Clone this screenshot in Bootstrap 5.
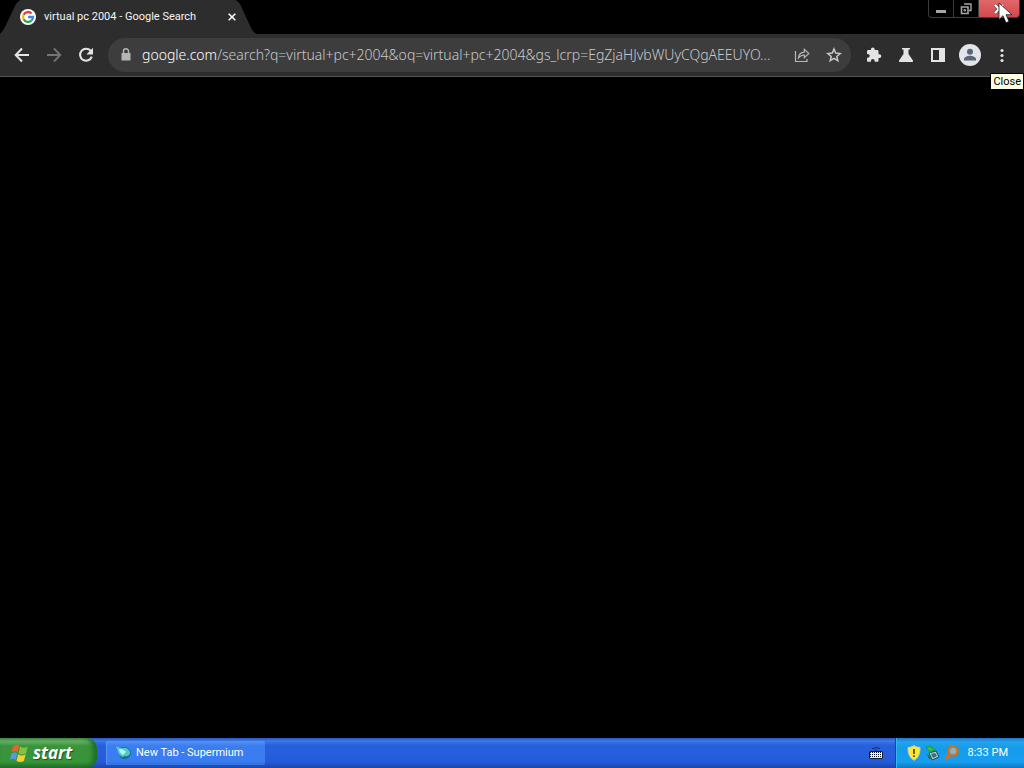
<!DOCTYPE html>
<html lang="en">
<head>
<meta charset="utf-8">
<meta name="viewport" content="width=device-width, initial-scale=1">
<title>virtual pc 2004 - Google Search</title>
<link href="https://cdn.jsdelivr.net/npm/bootstrap@5.3.0/dist/css/bootstrap.min.css" rel="stylesheet">
<style>
  body { background: #000; font-family: Roboto, sans-serif; font-size: 11px; line-height: 16px; cursor: default; }
  button { border: 0; padding: 0; background: none; color: inherit; }
  svg { display: block; flex: none; }
  .tab-strip { height: 34px; }
  .browser-tab { width: 256px; height: 34px; padding: 0 16px 0 20px; background: #2d2d2e; color: #f4f4f4; clip-path: polygon(0 100%, 4px 29px, 16px 4px, 20px 0, 236px 0, 240px 4px, 252px 30px, 100% 100%); }
  .caption-buttons { height: 18px; margin-right: 4px; border: 1px solid #3c3c3e; border-top: 0; border-radius: 0 0 4px 4px; overflow: hidden; }
  .caption-buttons button { width: 25px; height: 17px; color: #a4a5a5; border-right: 1px solid #3c3c3e; }
  .caption-buttons .close-window { width: 40px; border: 0; background: linear-gradient(#e0686a, #d3484f); color: #fff; }
  .toolbar { height: 43px; background: #2d2d2e; border-bottom: 1px solid #555; color: #e4e4e4; padding: 0 6px; }
  .tool { width: 32px; height: 32px; }
  .forward { color: #747475; }
  .omnibox { height: 34px; margin-left: 6px; border-radius: 17px; background: #3d3d3e; font-family: "Noto Sans", sans-serif; font-weight: 300; font-size: 14px; line-height: 20px; padding: 0 1px 0 10px; }
  .omnibox label { color: #fff; }
  .omnibox input { border: 0; outline: 0; padding: 0; background: none; color: #c8c8c9; min-width: 0; font: inherit; text-overflow: ellipsis; }
  .actions { margin-left: 7px; }
  .tip { right: 0; top: 73px; background: #ffffe4; color: #000; border: 1px solid #000; padding: 0 2px; height: 17px; }
  .pointer { right: 10px; top: 2px; z-index: 5; pointer-events: none; }
  .taskbar { height: 30px; color: #fff; background: linear-gradient(#2c58c4 0, #3a7bea 3px, #2760dc 7px, #245bda 24px, #1b46a8 30px); }
  .start { width: 97px; padding-left: 9px; border-radius: 0 10px 10px 0; background: linear-gradient(#5b9b5b 0, #66b565 3px, #3c923e 8px, #369638 24px, #256b2b 30px); box-shadow: inset -4px 0 5px #1d6c2c; font: italic bold 17px/24px "Open Sans", sans-serif; text-shadow: 1px 1px 1px #244d22; }
  .task { width: 159px; height: 24px; margin: 3px 0 0 9px; padding-left: 10px; border-radius: 2px; background: linear-gradient(#5792f2, #397df0 5px, #397df0 20px, #3371df); box-shadow: inset 1px 0 #5c95f3; }
  .tray { width: 129px; padding: 0 16px 0 11px; border-left: 1px solid #12479f; background: linear-gradient(#2874cc 0, #23a4ee 4px, #159bea 10px, #179eef 24px, #1276bf 30px); box-shadow: inset 1px 0 #35b6f3; }
</style>
</head>
<body class="vh-100 d-flex flex-column overflow-hidden position-relative">
<header>
  <div class="tab-strip d-flex align-items-start justify-content-between">
    <div class="browser-tab d-flex align-items-center">
      <svg width="16" height="16" viewBox="0 0 16 16"><circle cx="8" cy="8" r="8" fill="#fff"/><g fill="none" stroke-width="2.3"><path d="M11.6 4.5A5 5 0 0 0 3.6 5.7" stroke="#e34133"/><path d="M3.6 5.7a5 5 0 0 0 0 4.6" stroke="#f2b819"/><path d="M3.6 10.3a5 5 0 0 0 7.8 1.3" stroke="#34a353"/><path d="M11.4 11.6A5 5 0 0 0 13 8H8" stroke="#4285e8"/></g></svg>
      <span class="ms-2 flex-grow-1 text-nowrap">virtual pc 2004 - Google Search</span>
      <button aria-label="Close tab" class="p-1"><svg width="8" height="8" viewBox="0 0 8 8"><path d="M.7.7l6.6 6.6M7.3.7L.7 7.3" stroke="#fff" stroke-width="1.6"/></svg></button>
    </div>
    <div class="caption-buttons d-flex">
      <button aria-label="Minimize" class="d-flex justify-content-center align-items-center"><svg width="10" height="12"><path d="M0 7h10v3H0z" fill="currentColor"/></svg></button>
      <button aria-label="Restore" class="d-flex justify-content-center align-items-center"><svg width="12" height="12" viewBox="0 0 12 12" fill="none" stroke="currentColor"><path d="M4 1h7v6.500H9" stroke-width="1.4"/><path d="M1.500 4h6.500v6.500H1.500z" stroke-width="1.6"/><path d="M4 6.500h1.500v1.500H4z"/></svg></button>
      <button aria-label="Close" class="close-window d-flex justify-content-center align-items-center"><svg width="12" height="10" viewBox="0 0 12 10"><path d="M2 1l8 8M10 1L2 9" stroke="#555" stroke-width="3.6"/><path d="M2 1l8 8M10 1L2 9" stroke="#fff" stroke-width="2.2"/></svg></button>
    </div>
  </div>
  <div class="toolbar d-flex align-items-center">
    <button class="tool d-flex justify-content-center align-items-center" aria-label="Back"><svg width="16" height="16" viewBox="0 0 16 16" fill="none" stroke="currentColor" stroke-width="2"><path d="M15 8H2M8 1.5L1.7 8 8 14.5"/></svg></button>
    <button class="tool forward d-flex justify-content-center align-items-center" aria-label="Forward"><svg width="16" height="16" viewBox="0 0 16 16" fill="none" stroke="currentColor" stroke-width="1.8"><path d="M1 8h13M8 1.5L14.3 8 8 14.5"/></svg></button>
    <button class="tool d-flex justify-content-center align-items-center" aria-label="Reload"><svg width="16" height="16" viewBox="0 0 16 16"><path d="M13 4.2A6 6 0 1 0 13.8 9.6" fill="none" stroke="currentColor" stroke-width="2.1"/><path d="M15 .8v6.7H8.3z" fill="currentColor"/></svg></button>
    <div class="omnibox d-flex align-items-center flex-grow-1">
      <svg width="16" height="16" viewBox="0 0 16 16"><path d="M3.5 6h9v7.500h-9z" fill="#b5b5b6"/><path d="M5.5 6.500V4.300a2.500 2.500 0 0 1 5 0v2.200" fill="none" stroke="#b5b5b6" stroke-width="1.5"/></svg>
      <label for="url" class="ps-2">google.com</label>
      <input id="url" class="flex-grow-1 me-2" type="text" value="/search?q=virtual+pc+2004&amp;oq=virtual+pc+2004&amp;gs_lcrp=EgZjaHJvbWUyCQgAEEUYO...">
      <button class="tool d-flex justify-content-center align-items-center" aria-label="Share"><svg width="16" height="16" viewBox="0 0 16 16" fill="none" stroke="#b8b8b8" stroke-width="1.2"><path d="M1.5 4v10.500h11.500V12"/><path d="M4.500 11C4.800 7.200 6.800 5.200 10.300 5.100V2.300l4.500 4.200-4.500 4.200V8C7.800 8 6 9 4.500 11z"/></svg></button>
      <button class="tool d-flex justify-content-center align-items-center" aria-label="Bookmark"><svg width="16" height="16" viewBox="0 0 16 16" fill="none" stroke="#c8c8c8" stroke-width="1.5"><path d="M8 2l1.700 4.100 4.500.4-3.400 2.900 1 4.300L8 11.400l-3.800 2.300 1-4.300-3.400-2.900 4.500-.4z"/></svg></button>
    </div>
    <div class="actions d-flex align-items-center">
      <button class="tool d-flex justify-content-center align-items-center" aria-label="Extensions"><svg width="16" height="16" viewBox="0 0 16 16" fill="currentColor"><path d="M13.4 7.2h-.9V4.4c0-.7-.6-1.3-1.3-1.3H8.7v-.7a1.9 1.9 0 0 0-3.8 0v.7H2.2C1.5 3.100 1 3.700 1 4.400v2.500h.8a1.900 1.900 0 0 1 0 3.800H1v2.700c0 .7.500 1.300 1.200 1.300h2.700v-.8a1.900 1.900 0 0 1 3.800 0v.8h2.500c.7 0 1.300-.6 1.300-1.300V11h.9a1.900 1.900 0 0 0 0-3.800z"/></svg></button>
      <button class="tool d-flex justify-content-center align-items-center" aria-label="Experiments"><svg width="16" height="16" viewBox="0 0 16 16" fill="currentColor"><path d="M4 1h8v1.600h-1.500V7l4.300 6.200c.6.900.1 1.800-.9 1.800H2.100c-1 0-1.500-.9-.9-1.800L5.500 7V2.600H4z"/></svg></button>
      <button class="tool d-flex justify-content-center align-items-center" aria-label="Side panel"><svg width="16" height="16" viewBox="0 0 16 16"><path d="M1 1h14v14H1zM3 3v10h6V3z" fill="currentColor" fill-rule="evenodd"/></svg></button>
      <button class="tool d-flex justify-content-center align-items-center" aria-label="Profile"><svg width="22" height="22" viewBox="0 0 22 22"><circle cx="11" cy="11" r="11" fill="#e2e4ea"/><g fill="#5b6475"><circle cx="11" cy="7.800" r="3"/><path d="M5 16.500V15c0-2 3.500-3.300 6-3.300s6 1.300 6 3.300v1.500z"/></g></svg></button>
      <button class="tool d-flex justify-content-center align-items-center" aria-label="Menu"><svg width="16" height="16" viewBox="0 0 16 16" fill="currentColor"><circle cx="8" cy="3.500" r="1.600"/><circle cx="8" cy="8.500" r="1.600"/><circle cx="8" cy="13.500" r="1.600"/></svg></button>
    </div>
  </div>
</header>
<main class="flex-grow-1"></main>
<footer class="taskbar d-flex align-items-stretch">
  <button class="start d-flex align-items-center"><svg class="me-1" width="20" height="20" viewBox="0 0 20 20"><path d="M4 3.500Q7 .5 10.200 2.800L8.600 9.300Q5.500 7 2.500 9.600z" fill="#e8622c"/><path d="M11.200 3.500Q14.500 6 18.700 3.600L17 10.200q-4 2.400-7.500 0z" fill="#82c341"/><path d="M2.300 10.800Q5.200 8.200 8.300 10.400L6.600 17Q3.500 14.600.8 17.300z" fill="#5a96e8"/><path d="M9.200 11.300q3.700 2.400 7.500 0L15 17.700q-4 2.500-7.500 0z" fill="#f7cf34"/></svg>start</button>
  <button class="task d-flex align-items-center"><svg class="me-1" width="16" height="16" viewBox="0 0 16 16"><path d="M3 3q5-2 9 0 3 2 3 5-1 5-6 6-5 0-6-5z" fill="#176f8c"/><path d="M0 1q3 2 6 2 5-1 7 2 2 3 0 5-2 2-4 1l-2 1q-4-1-5-5z" fill="#4fc9c6"/><path d="M3 4q5 0 7 3l-3 3q-3-1-4-6z" fill="#b9f3ea"/></svg>New Tab - Supermium</button>
  <button class="ms-auto me-2 px-1 d-flex align-items-center" aria-label="Keyboard"><svg width="14" height="14" viewBox="0 0 14 14"><path d="M3 2.500h3v-1h3v1h2M7 3v2" fill="none" stroke="#18316e"/><path d="M0 5h14v8H0z" fill="#e8edf6"/><path d="M1 6.500h12M1 8.500h12M1 10.500h12" stroke="#10182e" stroke-dasharray="1 1"/><path d="M.5 5.500h13v7H.5z" fill="none" stroke="#10182e"/></svg></button>
  <div class="tray d-flex align-items-center">
    <svg width="14" height="16" viewBox="0 0 14 16"><path d="M7 .6c2 1.400 4 1.800 6 1.900.2 6-1.600 10.300-6 12.700C2.600 12.800.8 8.500 1 2.500 3 2.400 5 2 7 .6z" fill="#ffe82d" stroke="#c4ccd0"/><path d="M6.200 4h1.600v5H6.200zM6.200 10.300h1.600v1.800H6.200z" fill="#443f19"/></svg>
    <svg class="ms-1" width="15" height="16" viewBox="0 0 15 16"><path d="M4 8l7-2 3 6-7 3z" fill="#b8cbd2" stroke="#29484f"/><path d="M6 9l4-1 2 3-4 2z" fill="#30708a"/><path d="M1 2l5-1v2c3 0 5 1 5 3-2-1-3-1-5 0v2z" fill="#36c63b" stroke="#168337" stroke-width=".6"/><path d="M2 9l5 4-3 1z" fill="#267144"/></svg>
    <svg class="ms-1" width="15" height="16" viewBox="0 0 15 16"><circle cx="9" cy="6" r="4.500" fill="#7fb5cf" stroke="#d4701c" stroke-width="2.600"/><path d="M6 9L1.500 14" fill="none" stroke="#d4701c" stroke-width="3.400"/></svg>
    <span class="ms-auto text-nowrap">8:33 PM</span>
  </div>
</footer>
<div class="tip position-absolute" role="tooltip">Close</div>
<svg class="pointer position-absolute" width="16" height="22" viewBox="0 0 16 22"><path d="M1 1v16.500l4-3.800 3 7 3-1.300-3-6.700h6z" fill="#fff" stroke="#1c1c1c" stroke-width=".8"/></svg>
</body>
</html>
